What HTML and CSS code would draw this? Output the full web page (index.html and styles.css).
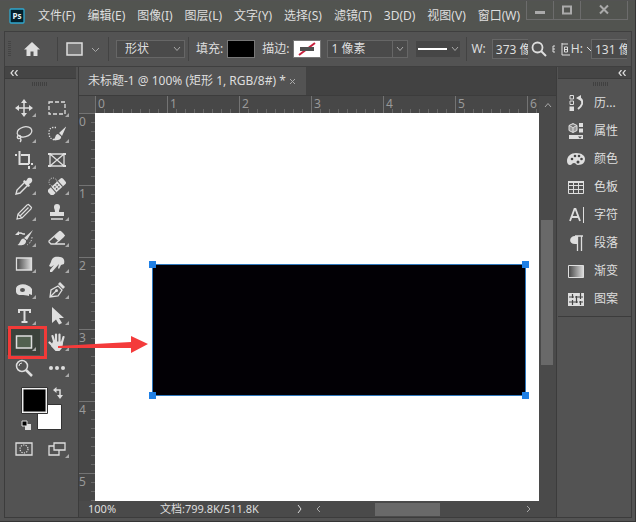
FILE: index.html
```html
<!DOCTYPE html>
<html lang="zh-CN">
<head>
<meta charset="utf-8">
<title>未标题-1</title>
<link rel="stylesheet" href="styles.css">
</head>
<body>
<div class="window">

	<header class="titlebar">
		<svg class="logo" viewBox="0 0 16 16" width="16" height="16"><rect x="1" y="1" width="14" height="14" rx="1" fill="#04202b" stroke="#2fa8cf" stroke-width="1.3"/><text x="8" y="11" text-anchor="middle">Ps</text></svg>
		<nav class="menu">
			<a href="#">文件(F)</a>
			<a href="#">编辑(E)</a>
			<a href="#">图像(I)</a>
			<a href="#">图层(L)</a>
			<a href="#">文字(Y)</a>
			<a href="#">选择(S)</a>
			<a href="#">滤镜(T)</a>
			<a href="#">3D(D)</a>
			<a href="#">视图(V)</a>
			<a href="#">窗口(W)</a>
		</nav>
		<div class="winbtns">
			<button aria-label="最小化"><svg width="12" height="12"><path d="M1 8.5h10" stroke-width="3"/></svg></button>
			<button aria-label="最大化"><svg width="12" height="12"><path d="M2 2.5h8v7h-8z" stroke-width="2"/></svg></button>
			<button class="close" aria-label="关闭"><svg width="12" height="12"><path d="M2 1.5l8 8M10 1.5l-8 8" stroke-width="2"/></svg></button>
		</div>
	</header>

	<div class="options">
		<span class="grip-v"></span>
		<button class="home" aria-label="主页"><svg width="18" height="16"><path class="f" d="M9 1L1 8.500h2.500V15h4v-4.500h3V15h4V8.500H17z"/></svg></button>
		<span class="sep"></span>
		<button class="preset" aria-label="矩形工具"><svg width="34" height="14"><path d="M1 1h15v12H1z" fill="#707070" stroke-width="1.500"/><path class="chev" d="M26 6l3.500 3.500L33 6"/></svg></button>
		<span class="sep"></span>
		<span class="pick mode"><select aria-label="模式"><option>形状</option></select><svg width="8" height="6"><path class="chev" d="M1 1l3 3.500L7 1"/></svg></span>
		<span class="sep"></span>
		<label for="fill">填充:</label>
		<button id="fill" class="swatch black"></button>
		<label for="stroke">描边:</label>
		<button id="stroke" class="swatch none"><svg width="26" height="16"><path d="M5 14L21 2" stroke="#c8203c" stroke-width="2"/><path d="M6 8h14" stroke="#505050" stroke-width="4"/></svg></button>
		<span class="pick size"><select aria-label="描边宽度"><option>1 像素</option></select><svg width="8" height="6"><path class="chev" d="M1 1l3 3.500L7 1"/></svg></span>
		<button class="linetype" aria-label="描边类型"><svg width="44" height="14"><path d="M2 7h29" stroke="#fff" stroke-width="2"/><path class="chev" d="M36 5l3 3.500L42 5"/></svg></button>
		<span class="sep"></span>
		<label for="w">W:</label>
		<input id="w" value="373 像素">
		<button class="search" aria-label="搜索"><svg width="16" height="16"><circle cx="6.500" cy="6.500" r="5" stroke-width="1.800"/><path d="M10 10l5 5" stroke-width="2"/></svg></button>
		<svg class="link" width="20" height="16"><path d="M4 5H2v6h2M2 8h2M11 3h6M11 2v12h8M13.500 6h3v5h-3zM13.500 8.500h3"/></svg>
		<label for="h">H:</label>
		<svg class="link" width="4" height="8"><path d="M0 2l4 4"/></svg>
		<input id="h" value="131 像素">
	</div>

	<div class="work">
		<aside class="toolbox">
			<div class="fold"><svg width="8" height="6"><path d="M3.500 0L1 3l2.500 3M7.500 0L5 3l2.500 3" stroke-width="1.200"/></svg></div>
			<div class="grip"></div>
			<div class="tools">
				<button class="sub" aria-label="移动"><svg viewBox="0 0 18 18"><path d="M9 2v14M2 9h14" stroke-width="1.500"/><path class="f" d="M9 0l3 4H6zM9 18l3-4H6zM0 9l4-3v6zM18 9l-4-3v6z"/></svg></button>
				<button class="sub" aria-label="选框"><svg viewBox="0 0 18 18"><path d="M1 3h16v12H1z" stroke-width="1.300" stroke-dasharray="4 2"/></svg></button>
				<button class="sub" aria-label="套索"><svg viewBox="0 0 18 18"><g stroke-width="1.300"><ellipse cx="9.500" cy="7" rx="7.500" ry="5" transform="rotate(-14 9 7)"/><circle cx="4" cy="12" r="1.700"/><path d="M5 13q2 2 0 4"/></g></svg></button>
				<button class="sub" aria-label="快速选择"><svg viewBox="0 0 18 18"><path d="M8 2.500H5Q1 3 1 8t4 6.500h3" stroke-width="1.300" stroke-dasharray="1.300 1.300"/><path class="f" d="M18.500 1l-7.500 7 3 3zM10 9c-3 0-2 4-5 6 4 1 9 0 8-3.500z"/></svg></button>
				<button class="sub" aria-label="裁剪"><svg viewBox="0 0 18 18"><path d="M4.500 0v13H14M0 4h2M6 4h8v9M14 15v3M16 13h2" stroke-width="2"/></svg></button>
				<button aria-label="图框"><svg viewBox="0 0 18 18"><path d="M2 3h14v12H2zM2 3l14 12M16 3L2 15" stroke-width="1.300"/><path class="f" d="M0 2h3v2H0zM15 2h3v2h-3zM0 14h3v2H0zM15 14h3v2h-3z"/></svg></button>
				<button class="sub" aria-label="吸管"><svg viewBox="0 0 18 18"><path class="f" d="M11 4l2-3q3-1 4 1t-1 4l-2 1 1 2-2 1-5-5 1-2z"/><path d="M9 6l-7 7-1 4 4-1 7-7" stroke-width="1.400"/></svg></button>
				<button class="sub" aria-label="修复画笔"><svg viewBox="0 0 18 18"><circle cx="5" cy="5" r="4" stroke-dasharray="1 1.300"/><g transform="rotate(-42 9 10)"><rect class="f" x="-1" y="6" width="20" height="7.500" rx="2"/><path d="M4.500 6v7.500M13.500 6v7.500" stroke="#535353"/><g fill="#535353" stroke="none"><circle cx="7.500" cy="8.500" r=".8"/><circle cx="10.500" cy="8.500" r=".8"/><circle cx="7.500" cy="11.200" r=".8"/><circle cx="10.500" cy="11.200" r=".8"/></g></g></svg></button>
				<button class="sub" aria-label="铅笔"><svg viewBox="0 0 18 18"><path d="M2 16l1-5 9-9 1.500-.500 3 3-.500 1.500-9 9zM3 11l4 4M5 13l8.500-8.500" stroke-width="1.200"/></svg></button>
				<button class="sub" aria-label="图章"><svg viewBox="0 0 18 18"><path class="f" d="M9 1a3 3 0 0 1 3 3c0 2-1 2-1 5h5v4H2V9h5c0-3-1-3-1-5a3 3 0 0 1 3-3z"/><path d="M3 16h12" stroke-width="1.500"/></svg></button>
				<button class="sub" aria-label="历史画笔"><svg viewBox="0 0 18 18"><path d="M2 5q3-2 6 0h2" stroke-width="1.500"/><path class="f" d="M0 6l4-4v4zM18 1l-9 8 3 2zM8.500 9.500c-3 0-3 4.500-6 6.500 4 1 9 0 8.500-4.500z"/><path d="M17 8q0 5-5 8" stroke-dasharray="1.500 1.500"/></svg></button>
				<button class="sub" aria-label="橡皮擦"><svg viewBox="0 0 18 18"><path d="M1 12l10-9q1-1 2 0l2.500 2.500q1 1 0 2L7 15H3l-2-2zM7 15h10" stroke-width="1.300"/><path class="f" d="M6 8l6-6 5 4.500-6 6z"/></svg></button>
				<button class="sub" aria-label="渐变"><svg viewBox="0 0 18 18"><defs><linearGradient id="g"><stop offset="0" stop-color="#444"/><stop offset="1" stop-color="#ddd"/></linearGradient></defs><path d="M1.500 3h15v12h-15z" fill="url(#g)" stroke-width="1.300"/></svg></button>
				<button class="sub" aria-label="涂抹"><svg viewBox="0 0 18 18"><path class="f" d="M3 7c1-5 4-6 9-5 4 0 5 4 4 7l-3 1-2 4-1-1 1-4-7 8-2 0 0-2 4-5-3 2-2-1z"/></svg></button>
				<button class="sub" aria-label="加深"><svg viewBox="0 0 18 18"><path class="f" fill-rule="evenodd" d="M1 7C3 2 13 2 17 8v6l-3-1v2c-5-2-12 1-13-4zM5 9a2.500 2 0 1 0 5 0 2.500 2 0 1 0-5 0z"/></svg></button>
				<button class="sub" aria-label="钢笔"><svg viewBox="0 0 18 18"><path d="M2 16l1-7 7-4 4 4-4 6zM2 16l6-6" stroke-width="1.300"/><circle class="f" cx="8.500" cy="9.500" r="1.500"/><path class="f" d="M10 3l2-2 5 5-2 2z"/></svg></button>
				<button class="sub" aria-label="文字"><svg viewBox="0 0 18 18"><path d="M4 6V3h11v3M9.500 3v12M6.500 15h6" stroke-width="2"/></svg></button>
				<button class="sub" aria-label="选择"><svg viewBox="0 0 18 18"><path class="f" d="M4 0l12 11h-5l3 5-3 1.500L8 12.500 4 16z"/></svg></button>
				<button class="sub current" aria-label="矩形"><svg viewBox="0 0 18 18"><path d="M1.500 3h15v12h-15z" fill="#52614f" stroke-width="1.500"/></svg></button>
				<button class="sub" aria-label="抓手"><svg viewBox="0 0 18 18"><path d="M4.500 3l2 7M8 1.500V10M11.500 1.500V10M15.500 4l-2 7M1.500 9.500l4 4" stroke-width="2.200" stroke-linecap="round"/><path class="f" d="M5 8.500h10l-.500 6-3 3.500H7.500L3 13z"/></svg></button>
				<button aria-label="缩放"><svg viewBox="0 0 18 18"><circle cx="7" cy="7" r="5.500" stroke-width="1.500"/><path d="M4 7q0-3 3-3"/><path d="M11 11l6 6" stroke-width="2.500"/></svg></button>
				<button class="sub" aria-label="更多"><svg viewBox="0 0 18 18"><g class="f"><circle cx="3" cy="9" r="2"/><circle cx="9" cy="9" r="2"/><circle cx="15" cy="9" r="2"/></g></svg></button>
			</div>
			<!-- foreground / background colours -->
			<svg class="colors" width="42" height="44" viewBox="0 0 42 44">
				<path d="M16.500 17.500h24v25h-24z" fill="#fff" stroke="#333"/>
				<path d="M.5.5h26v26H.5z" fill="#fff" stroke="#333"/>
				<path class="k" d="M2 2h23v23H2z"/>
				<path d="M34 3h5v7" stroke-width="1.500"/><path class="f" d="M32 3l3.500-3v6zM39 12l-3-4h6z"/>
				<path class="f" d="M4 37h6v6H4z"/><path class="k" d="M1 34h5v5H1z" stroke="#ddd"/>
			</svg>
			<div class="modes">
				<button aria-label="快速蒙版"><svg viewBox="0 0 18 18"><path d="M1 3h16v12H1z" stroke-width="1.300"/><circle cx="9" cy="9" r="4" stroke-width="1.200" stroke-dasharray="1.300 1.200"/></svg></button>
				<button class="sub" aria-label="屏幕模式"><svg viewBox="0 0 18 18"><path d="M6 3h11v7H6zM6 6H1v9h10v-5" stroke-width="1.300"/></svg></button>
			</div>
		</aside>

		<main class="doc">
			<div class="tabs"><div class="tab"><span>未标题-1 @ 100% (矩形 1, RGB/8#) *</span><button aria-label="关闭"><svg width="7" height="7"><path d="M1 1l5 5M6 1L1 6"/></svg></button></div></div>
			<div class="ruler-row">
				<div class="corner"></div>
				<div class="ruler"><span>0</span><span>1</span><span>2</span><span>3</span><span>4</span><span>5</span><span>6</span></div>
				<div class="up"><svg width="8" height="6"><path class="chev" d="M1 5l3-3.500L7 5"/></svg></div>
			</div>
			<div class="view">
				<div class="ruler vert"><span>0</span><span>1</span><span>2</span><span>3</span><span>4</span><span>5</span></div>
				<div class="canvas">
					<div class="shape"><i class="tl"></i><i class="tr"></i><i class="bl"></i><i class="br"></i></div>
				</div>
				<div class="vscroll"><div class="thumb"></div></div>
			</div>
			<div class="status">
				<span class="zoom">100%</span>
				<span class="size">文档:799.8K/511.8K</span>
				<svg width="6" height="10"><path d="M1 1l3 4-3 4"/></svg>
				<div class="hscroll">
					<svg width="6" height="8"><path class="chev" d="M5 1L2 4l3 3"/></svg>
					<div class="thumb"></div>
					<svg width="6" height="8"><path class="chev" d="M1 1l3 3-3 3"/></svg>
				</div>
			</div>
		</main>

		<aside class="panels">
			<div class="fold"><svg width="8" height="6"><path d="M3.500 0L1 3l2.500 3M7.500 0L5 3l2.500 3" stroke-width="1.200"/></svg></div>
			<div class="grip"></div>
			<div class="list">
				<button><svg viewBox="0 0 18 18"><path d="M3 1.500h3.500v3.500H3zM3 7h3.500v3.500H3z"/><path class="f" d="M2.500 12.500h4.500V17H2.500zM9 4l5-3v6z"/><path d="M12 4q4 1 3 6-1 3-4 5" stroke-width="2"/></svg>历...</button>
				<button><svg viewBox="0 0 18 18"><path d="M6 1.500l4 2v5l-4 2-4-2v-5zM2 3.500l4 2 4-2M6 5.500v5" fill="#999"/><path class="f" d="M12 1h4v4h-4zM12 6.500h4v4h-4zM2 13h14v4H2z"/><path d="M11 14.500h4l-2 2z" fill="#444" stroke="none"/></svg>属性</button>
				<button><svg viewBox="0 0 18 18"><path class="f" d="M0 11c0-5 4-8 9-8 6 0 9 3 9 6s-2 6-7 6c-2 0-2-2-4-2s-2 2-4 2-3-2-3-4z"/><g fill="#454545" stroke="none"><circle cx="5" cy="9" r="1.300"/><circle cx="8" cy="6" r="1.300"/><circle cx="12" cy="6" r="1.300"/><circle cx="14.500" cy="9" r="1.300"/><circle cx="11" cy="12" r="1.500"/></g></svg>颜色</button>
				<button><svg viewBox="0 0 18 18"><path d="M1.500 3.500h15v12h-15zM1.500 7.500h15M1.500 11.500h15M6.500 3.500v12M11.500 3.500v12"/><path class="f" d="M1 3h16v2H1z"/></svg>色板</button>
				<button><svg viewBox="0 0 18 18"><path d="M3 15L7.500 3h1L13 15M4.500 11h7" stroke-width="1.800"/><path d="M16.500 1v16"/></svg>字符</button>
				<button><svg viewBox="0 0 18 18"><path class="f" d="M10 2v8H8C1 10 2 2 8 2z"/><path d="M8 2h8M10.500 2v15M14.500 2v15" stroke-width="1.300"/></svg>段落</button>
				<button><svg viewBox="0 0 18 18"><path d="M1.500 3.500h15v12h-15z" fill="url(#g)"/></svg>渐变</button>
				<button><svg viewBox="0 0 18 18"><path class="f" d="M1 3h16v13H1z"/><path d="M5.500 4v4M5.500 10v5M9.500 6v7M13.500 3v6M13.500 11v4M2 7h5M8 7h8M2 12h9M12 12h4" stroke="#444" stroke-width="1.200"/></svg>图案</button>
			</div>
		</aside>

		<!-- tutorial marks -->
		<div class="redbox"></div>
		<svg class="arrow" width="92" height="18" viewBox="0 0 92 18"><path d="M1 10L74 6V0l17 8-17 9v-5L1 12z" fill="#f43b3b" stroke="none"/></svg>
	</div>
</div>
</body>
</html>
```

FILE: styles.css
```css
* {
	box-sizing: border-box;
}
body {
	margin: 0;
	background: #353535;
}
body,button,input,select {
	font-family: "Noto Sans","Noto Sans CJK SC",sans-serif;
	font-size: 12px;
	line-height: 16px;
	color: #dedede;
}
button {
	display: flex;
	align-items: center;
	justify-content: center;
	padding: 0;
	border: 0;
	background: none;
}
a {
	color: #dedede;
	text-decoration: none;
}
svg {
	display: block;
	flex: none;
	fill: none;
	stroke: #dedede;
}
.f {
	fill: #dedede;
	stroke: none;
}
.k {
	fill: #000;
}
.chev {
	stroke: #a8a8a8;
}
.window {
	display: flex;
	flex-direction: column;
	height: 100vh;
	padding: 1px 0 0;
	border: 1px solid #353535;
	border-width: 0 1px 1px 0;
	background: #535353;
}

/* menu bar */
.titlebar {
	display: flex;
	align-items: center;
	height: 30px;
	padding-left: 9px;
	background: #525450;
}
.logo text {
	font-size: 8px;
	font-weight: bold;
	fill: #e4f4fa;
	stroke: none;
}
.menu {
	display: flex;
	gap: 12px;
	padding-left: 13px;
	white-space: nowrap;
}
.winbtns {
	display: flex;
	align-self: flex-start;
	margin-left: auto;
	margin-right: 7px;
	border: 1px solid #6c6c6c;
	border-top: 0;
}
.winbtns button {
	width: 27px;
	height: 18px;
	border-right: 1px solid #6c6c6c;
}
.winbtns .close {
	width: 46px;
	border: 0;
}
.winbtns svg {
	stroke: #aaa;
}

/* tool options */
.options {
	display: flex;
	align-items: center;
	height: 36px;
	margin: 0 3px 0 4px;
	border: 1px solid #3f3f3f;
	overflow: hidden;
	white-space: nowrap;
}
.options > * {
	flex: none;
}
.grip-v {
	width: 3px;
	height: 16px;
	margin-left: 3px;
	background: repeating-linear-gradient(#444 0 1px,#535353 1px 2px);
}
.home {
	margin: 0 16px 0 12px;
}
.sep {
	width: 1px;
	height: 24px;
	background: #434343;
}
.preset {
	margin: 0 8px;
}
.pick {
	display: flex;
	align-items: center;
	position: relative;
	border: 1px solid #666;
	background: #4a4a4a;
}
.pick select {
	width: 100%;
	height: 16px;
	padding: 0 8px;
	border: 0;
	background: none;
	appearance: none;
	line-height: 14px;
}
.pick svg {
	position: absolute;
	right: 3px;
	pointer-events: none;
}
.mode {
	width: 69px;
	margin: 0 3px 0 7px;
}
.options label {
	margin-left: 7px;
}
.swatch {
	width: 28px;
	height: 18px;
	margin-left: 4px;
	border: 1px solid #777;
}
.black {
	background: #000;
}
.none {
	background: #fff;
}
.size.pick {
	width: 81px;
	margin-left: 6px;
}
.size.pick select {
	padding-left: 3px;
	background: linear-gradient(#666,#666) 64px 0/1px 100% no-repeat;
}
.linetype {
	height: 16px;
	margin: 0 6px 0 8px;
	background: #464646;
}
.options .sep + label[for=w] {
	margin-left: 4px;
}
.options input {
	width: 36px;
	height: 20px;
	padding: 0 0 0 3px;
	border: 1px solid #666;
	border-right: 0;
	background: #4a4a4a;
}
#w {
	margin-left: 6px;
}
.search {
	margin-left: 3px;
}
.options label[for=h] {
	margin-left: 0;
}
.link {
	margin-left: 4px;
}

/* work area */
.work {
	display: flex;
	flex: 1;
	position: relative;
	min-height: 0;
	margin: 0 3px 3px 4px;
	border: 1px solid #3c3c3c;
	border-top: 0;
}
.toolbox,.panels {
	display: flex;
	flex: none;
	flex-direction: column;
	width: 71px;
}
.fold {
	height: 12px;
	padding: 3px 5px;
	border-bottom: 1px solid #3c3c3c;
	background: #454545;
}
.grip {
	width: 15px;
	height: 4px;
	margin: 3px 0 9px 27px;
	background: repeating-linear-gradient(90deg,#404040 0 1px,#535353 1px 2px);
}
.tools,.modes {
	display: grid;
	grid-template-columns: 33px 33px;
	grid-auto-rows: 26px;
	padding-left: 2px;
}
.tools button,.modes button {
	position: relative;
}
.tools svg,.modes svg {
	width: 18px;
	height: 18px;
}
.sub::after {
	content: "";
	position: absolute;
	right: 4px;
	bottom: 4px;
	border: 2px solid #aaa;
	border-top-color: transparent;
	border-left-color: transparent;
}
.current {
	background: #3c423b;
}
.colors {
	margin: 6px 0 0 16px;
}
.modes {
	margin-top: 5px;
}

/* document */
.doc {
	display: flex;
	flex: 1;
	flex-direction: column;
	min-width: 0;
	margin: 0 1px 0 2px;
	border: 1px solid #3c3c3c;
	border-width: 0 1px;
	background: #424242;
}
.tabs {
	display: flex;
	height: 28px;
}
.tab {
	display: flex;
	align-items: center;
	gap: 3px;
	padding: 0 10px 0 9px;
	background: #535353;
	white-space: nowrap;
}
.tab svg {
	stroke: #aaa;
}
.ruler-row {
	display: flex;
	height: 18px;
	border-top: 1px solid #3c3c3c;
}
.corner {
	flex: none;
	width: 16px;
	background: #505050;
}
.ruler {
	display: flex;
	flex: 1;
	overflow: hidden;
	background: #474747;
	color: #999;
}
.ruler span {
	flex: none;
	width: 72px;
	padding-left: 2px;
	border-left: 1px solid #737373;
	background: repeating-linear-gradient(90deg,transparent 0 8px,#686868 8px 9px) 0 100%/100% 4px no-repeat;
}
.ruler.vert {
	flex: none;
	flex-direction: column;
	width: 16px;
}
.vert span {
	width: 16px;
	height: 72px;
	padding: 0;
	border-left: 0;
	border-top: 1px solid #737373;
	background: repeating-linear-gradient(transparent 0 8px,#686868 8px 9px) 100% 0/4px 100% no-repeat;
}
.up {
	display: flex;
	align-items: center;
	justify-content: center;
	width: 17px;
	background: #4a4a4a;
}
.view {
	display: flex;
	flex: 1;
	min-height: 0;
}
.canvas {
	flex: 1;
	position: relative;
	background: #fff;
}
.shape {
	position: absolute;
	left: 57px;
	top: 151px;
	width: 374px;
	height: 132px;
	border: 1px solid #2f78bd;
	background: #020005;
}
.shape i {
	position: absolute;
	width: 7px;
	height: 7px;
	background: #1f80e6;
}
.tl,.tr {
	top: -4px;
}
.bl,.br {
	bottom: -4px;
}
.tl,.bl {
	left: -4px;
}
.tr,.br {
	right: -4px;
}
.vscroll {
	width: 17px;
	padding: 107px 3px 0 2px;
	background: #4a4a4a;
}
.vscroll .thumb {
	height: 145px;
	background: #696969;
}
.status {
	display: flex;
	align-items: center;
	height: 16px;
	padding-left: 9px;
	background: #4a4a4a;
	font-size: 11px;
	white-space: nowrap;
}
.zoom {
	width: 72px;
}
.status > svg {
	margin-left: auto;
}
.hscroll {
	display: flex;
	align-items: center;
	width: 54%;
	padding: 0 24px 0 12px;
}
.hscroll .thumb {
	width: 65px;
	height: 13px;
	margin: 0 auto 0 54px;
	background: #696969;
}

/* collapsed panels */
.panels {
	width: 73px;
}
.panels .fold {
	display: flex;
	justify-content: flex-end;
}
.panels .grip {
	margin: 3px 0 3px 35px;
}
.list {
	padding: 0 0 3px 9px;
	border-bottom: 1px solid #3c3c3c;
}
.list button {
	gap: 9px;
	height: 28px;
	white-space: nowrap;
}
.list svg {
	width: 18px;
	height: 18px;
}

.redbox {
	position: absolute;
	left: 3px;
	top: 259px;
	width: 39px;
	height: 33px;
	border: 3px solid #f23a38;
}
.arrow {
	position: absolute;
	left: 52px;
	top: 269px;
}
```
